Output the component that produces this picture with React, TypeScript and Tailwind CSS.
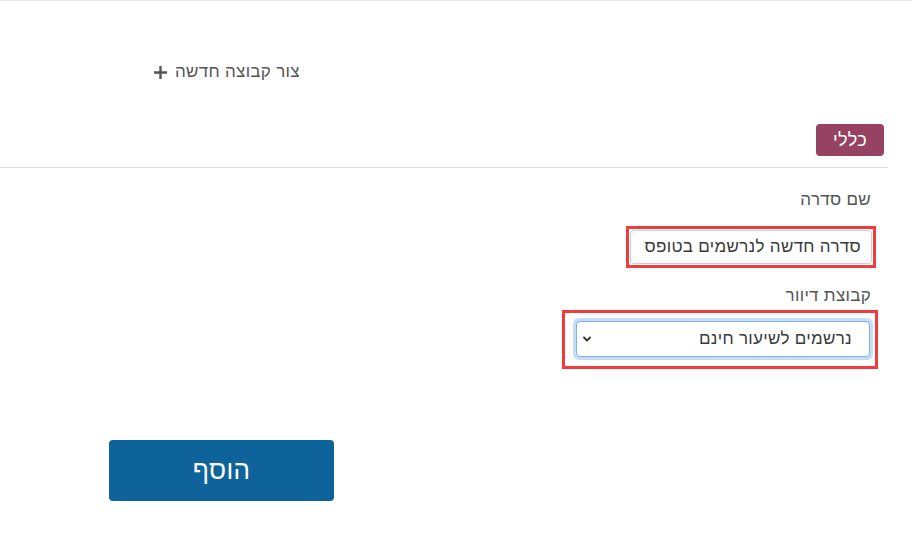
import React from 'react';

const App: React.FC = () => {
  return (
    <div
      dir="rtl"
      className="w-[912px] h-[536px] bg-white border-t border-[#e2e6ef] font-['Liberation_Sans',Arial,sans-serif] text-[#555] tracking-[0.3px] overflow-hidden"
    >
      {/* Create group link */}
      <div className="flex justify-end pl-[153px] pt-[59px]">
        <button className="flex items-center gap-[7px] text-[17px] leading-[24px] text-[#555] tracking-[0.3px]">
          <span>צור קבוצה חדשה</span>
          <svg width="15" height="15" viewBox="0 0 15 15">
            <path d="M7.5 1 V14 M1 7.5 H14" stroke="#555" strokeWidth="2.4" />
          </svg>
        </button>
      </div>

      {/* Tab badge */}
      <div className="flex mr-[28px] mt-[40px]">
        <span className="h-[32px] w-[68px] flex items-center justify-center rounded-[4px] bg-[#964262] text-white text-[18px]">
          כללי
        </span>
      </div>

      <div className="mt-[11px] mr-[24px] border-t border-[#dcdcdc]" />

      {/* Series name */}
      <div className="mt-[20px] mr-[41px] text-[17px] leading-[24px]">שם סדרה</div>
      <div className="flex mr-[36px] mt-[14px]">
        <div className="border-[3px] border-solid border-[#f23c3c] p-[1px] w-[250px]">
          <div className="h-[34px] border border-solid border-[#c9cfd6] rounded-[4px] bg-white flex items-center px-[10px] text-[17px] text-[#3a3a3a]">
            סדרה חדשה לנרשמים בטופס
          </div>
        </div>
      </div>

      {/* Mailing group */}
      <div className="mt-[16px] mr-[41px] text-[17px] leading-[24px]">קבוצת דיוור</div>
      <div className="flex mr-[34px] mt-[2px]">
        <div className="border-[3px] border-[#f23c3c] w-[316px] h-[59px] pt-[5px] pr-[2px] pl-[8px]">
          <div className="h-[42px] rounded-[6px] bg-[#c6dcf7] p-[3px]">
            <div className="h-full border border-[#7fb0ef] rounded-[4px] bg-white flex items-center justify-between pr-[17px] pl-[5px] text-[17px] text-[#3a3a3a]">
              <span>נרשמים לשיעור חינם</span>
              <svg width="10" height="10" viewBox="0 0 10 10" fill="none">
                <path d="M2 3.5 L5 6.5 L8 3.5" stroke="#333" strokeWidth="1.8" strokeLinecap="round" strokeLinejoin="round" />
              </svg>
            </div>
          </div>
        </div>
      </div>

      {/* Submit */}
      <div className="flex justify-end pl-[109px] mt-[71px]">
        <button className="w-[225px] h-[61px] rounded-[4px] bg-[#0f639b] text-white text-[26px]">
          הוסף
        </button>
      </div>
    </div>
  );
};

export default App;
